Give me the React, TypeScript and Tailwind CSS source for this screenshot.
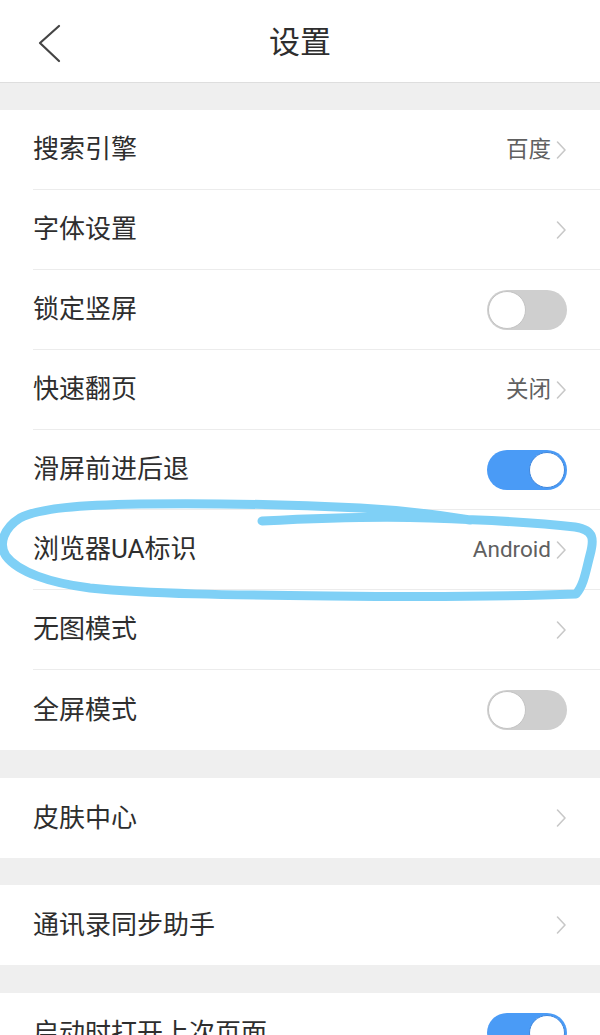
import type { ReactNode } from "react";

type Row = { label: string; value?: string; toggle?: boolean; on?: boolean };

const mainRows: Row[] = [
  { label: "搜索引擎", value: "百度" },
  { label: "字体设置", value: "" },
  { label: "锁定竖屏", toggle: true, on: false },
  { label: "快速翻页", value: "关闭" },
  { label: "滑屏前进后退", toggle: true, on: true },
  { label: "浏览器UA标识", value: "Android" },
  { label: "无图模式", value: "" },
  { label: "全屏模式", toggle: true, on: false },
];

function Chevron() {
  return (
    <svg width="12" height="20" viewBox="0 0 12 20" className="ml-1">
      <path d="M2.5 2 L10 10 L2.5 18" fill="none" stroke="#c8c8c8" strokeWidth="1.6" strokeLinecap="round" strokeLinejoin="round" />
    </svg>
  );
}

function Toggle({ on }: { on?: boolean }) {
  return on ? (
    <div className="w-[80px] h-[40px] rounded-full bg-[#4a9bf6] flex items-center justify-end pr-[2px]">
      <div className="w-[36px] h-[36px] rounded-full bg-white border border-[#3f86dc]" />
    </div>
  ) : (
    <div className="w-[80px] h-[40px] rounded-full bg-[#cfcfcf] flex items-center pl-[1px]">
      <div className="w-[38px] h-[38px] rounded-full bg-white border border-[#c4c4c4]" />
    </div>
  );
}

function SettingRow({ row, last }: { row: Row; last?: boolean }) {
  return (
    <div className="pl-[33px]">
      <div className={`h-[80px] flex items-center justify-between pr-[33px] ${last ? "" : "border-b border-[#ececec]"}`}>
        <span className="text-[26px] text-[#2e2e2e]">{row.label}</span>
        {row.toggle ? (
          <Toggle on={row.on} />
        ) : (
          <div className="flex items-center text-[22.5px] text-[#606060]">
            {row.value && <span>{row.value}</span>}
            <Chevron />
          </div>
        )}
      </div>
    </div>
  );
}

function Group({ children, gap }: { children: ReactNode; gap: string }) {
  return <div className={`${gap} bg-white`}>{children}</div>;
}

export default function App() {
  return (
    <div
      className="relative min-h-[1035px] bg-[#efefef] overflow-hidden"
      style={{ fontFamily: 'Roboto, "Noto Sans CJK SC", sans-serif' }}
    >
      <header className="h-[83px] bg-white border-b border-[#dedede] relative flex items-center justify-center">
        <svg width="30" height="40" viewBox="0 0 30 40" className="absolute left-[34px] top-[23px]">
          <path d="M25 3 L6 20 L25 38" fill="none" stroke="#444" strokeWidth="2.2" strokeLinecap="round" strokeLinejoin="round" />
        </svg>
        <h1 className="text-[31px] text-[#2e2e2e] mt-[4px]">设置</h1>
      </header>

      <Group gap="mt-[27px]">
        {mainRows.map((r, i) => (
          <SettingRow key={r.label} row={r} last={i === mainRows.length - 1} />
        ))}
      </Group>
      <Group gap="mt-[28px]">
        <SettingRow row={{ label: "皮肤中心", value: "" }} last />
      </Group>
      <Group gap="mt-[27px]">
        <SettingRow row={{ label: "通讯录同步助手", value: "" }} last />
      </Group>
      <Group gap="mt-[28px]">
        <SettingRow row={{ label: "启动时打开上次页面", toggle: true, on: true }} last />
      </Group>

      {/* hand-drawn highlight around the UA row */}
      <svg className="absolute left-0 top-0 pointer-events-none" width="600" height="1035" viewBox="0 0 600 1035">
        <path
          d="M262 521 C320 518 380 516 430 518 C490 520 540 523 575 527 C595 530 594 540 590 555 C586 570 584 585 576 594 C500 597 420 597 330 596 C230 595 150 594 90 588 C50 583 18 572 6 556 C-2 544 4 528 20 518 C40 508 80 505 140 504 C220 503 300 505 360 508 C400 510 440 515 470 520"
          fill="none"
          stroke="#7fd0f6"
          strokeWidth="9"
          strokeLinecap="round"
          strokeLinejoin="round"
        />
      </svg>
    </div>
  );
}
